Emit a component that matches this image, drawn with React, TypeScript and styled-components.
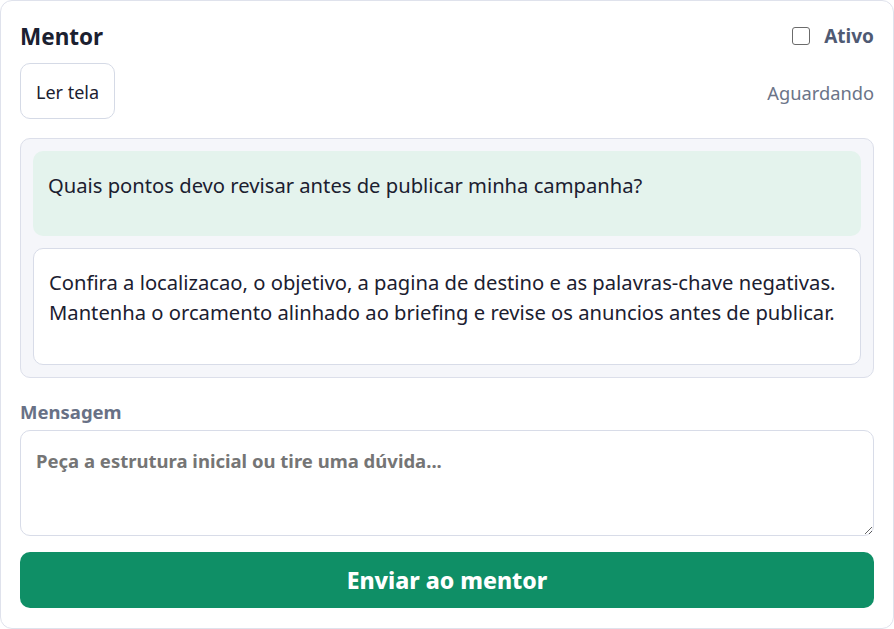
import React from "react";
import styled, { createGlobalStyle } from "styled-components";

const Global = createGlobalStyle`
  html, body { margin: 0; padding: 0; background: #ffffff; }
  body { font-family: "Noto Sans", "Open Sans", sans-serif; color: #1f2433; }
  * { box-sizing: border-box; }
`;

const Card = styled.div`
  width: 894px;
  height: 629px;
  border: 1px solid #dfe2ec;
  border-radius: 12px;
  background: #ffffff;
  padding: 18px 19px 20px 19px;
  display: flex;
  flex-direction: column;
`;

const HeaderRow = styled.div`
  display: flex;
  align-items: center;
  justify-content: space-between;
  height: 34px;
`;

const Title = styled.h2`
  margin: 0;
  font-size: 22.5px;
  font-weight: 700;
  color: #1b2030;
`;

const Toggle = styled.label`
  display: flex;
  align-items: center;
  gap: 14px;
  font-size: 19px;
  font-weight: 700;
  color: #4f5a73;
`;

const Box = styled.span`
  width: 18px;
  height: 18px;
  border: 1.5px solid #6b6b6b;
  border-radius: 3px;
  background: #fff;
`;

const ToolRow = styled.div`
  display: flex;
  align-items: center;
  justify-content: space-between;
  margin-top: 10px;
`;

const GhostButton = styled.button`
  font-family: inherit;
  height: 56px;
  padding: 2px 15px 0;
  border: 1px solid #d5dae6;
  border-radius: 10px;
  background: #fff;
  font-size: 18px;
  color: #1b2030;
`;

const Status = styled.span`
  font-size: 18.3px;
  color: #6b7488;
  padding-top: 3px;
`;

const Thread = styled.div`
  margin-top: 19px;
  background: #f5f6fa;
  border: 1px solid #dcdfea;
  border-radius: 10px;
  padding: 12px;
  display: flex;
  flex-direction: column;
  gap: 12px;
`;

const Bubble = styled.div<{ $mine?: boolean }>`
  border-radius: 10px;
  padding: ${(p) => (p.$mine ? "19px 15px 36px 15px" : "18px 15px 37px 15px")};
  font-size: 20.2px;
  line-height: 30px;
  white-space: pre-line;
  color: #1b2030;
  background: ${(p) => (p.$mine ? "#e4f3ed" : "#ffffff")};
  border: ${(p) => (p.$mine ? "none" : "1px solid #d8dce8")};
`;

const Label = styled.div`
  margin-top: 21px;
  font-size: 18.5px;
  font-weight: 700;
  color: #687186;
`;

const Input = styled.textarea`
  margin-top: 6px;
  height: 106px;
  width: 100%;
  border: 1px solid #d8dce8;
  border-radius: 10px;
  padding: 17px 15px;
  font-family: inherit;
  font-size: 18.5px;
  font-weight: 700;
  resize: vertical;
  outline: none;
  &::placeholder { color: #757575; }
`;

const Submit = styled.button`
  margin-top: 16px;
  height: 56px;
  width: 100%;
  border: none;
  border-radius: 10px;
  background: #0f8f66;
  color: #ffffff;
  font-family: inherit;
  font-size: 23px;
  font-weight: 800;
`;

export default function App() {
  return (
    <>
      <Global />
      <Card>
        <HeaderRow>
          <Title>Mentor</Title>
          <Toggle>
            <Box />
            Ativo
          </Toggle>
        </HeaderRow>
        <ToolRow>
          <GhostButton>Ler tela</GhostButton>
          <Status>Aguardando</Status>
        </ToolRow>
        <Thread>
          <Bubble $mine>Quais pontos devo revisar antes de publicar minha campanha?</Bubble>
          <Bubble>
            {"Confira a localizacao, o objetivo, a pagina de destino e as palavras-chave negativas.\nMantenha o orcamento alinhado ao briefing e revise os anuncios antes de publicar."}
          </Bubble>
        </Thread>
        <Label>Mensagem</Label>
        <Input placeholder="Peça a estrutura inicial ou tire uma dúvida..." />
        <Submit>Enviar ao mentor</Submit>
      </Card>
    </>
  );
}
